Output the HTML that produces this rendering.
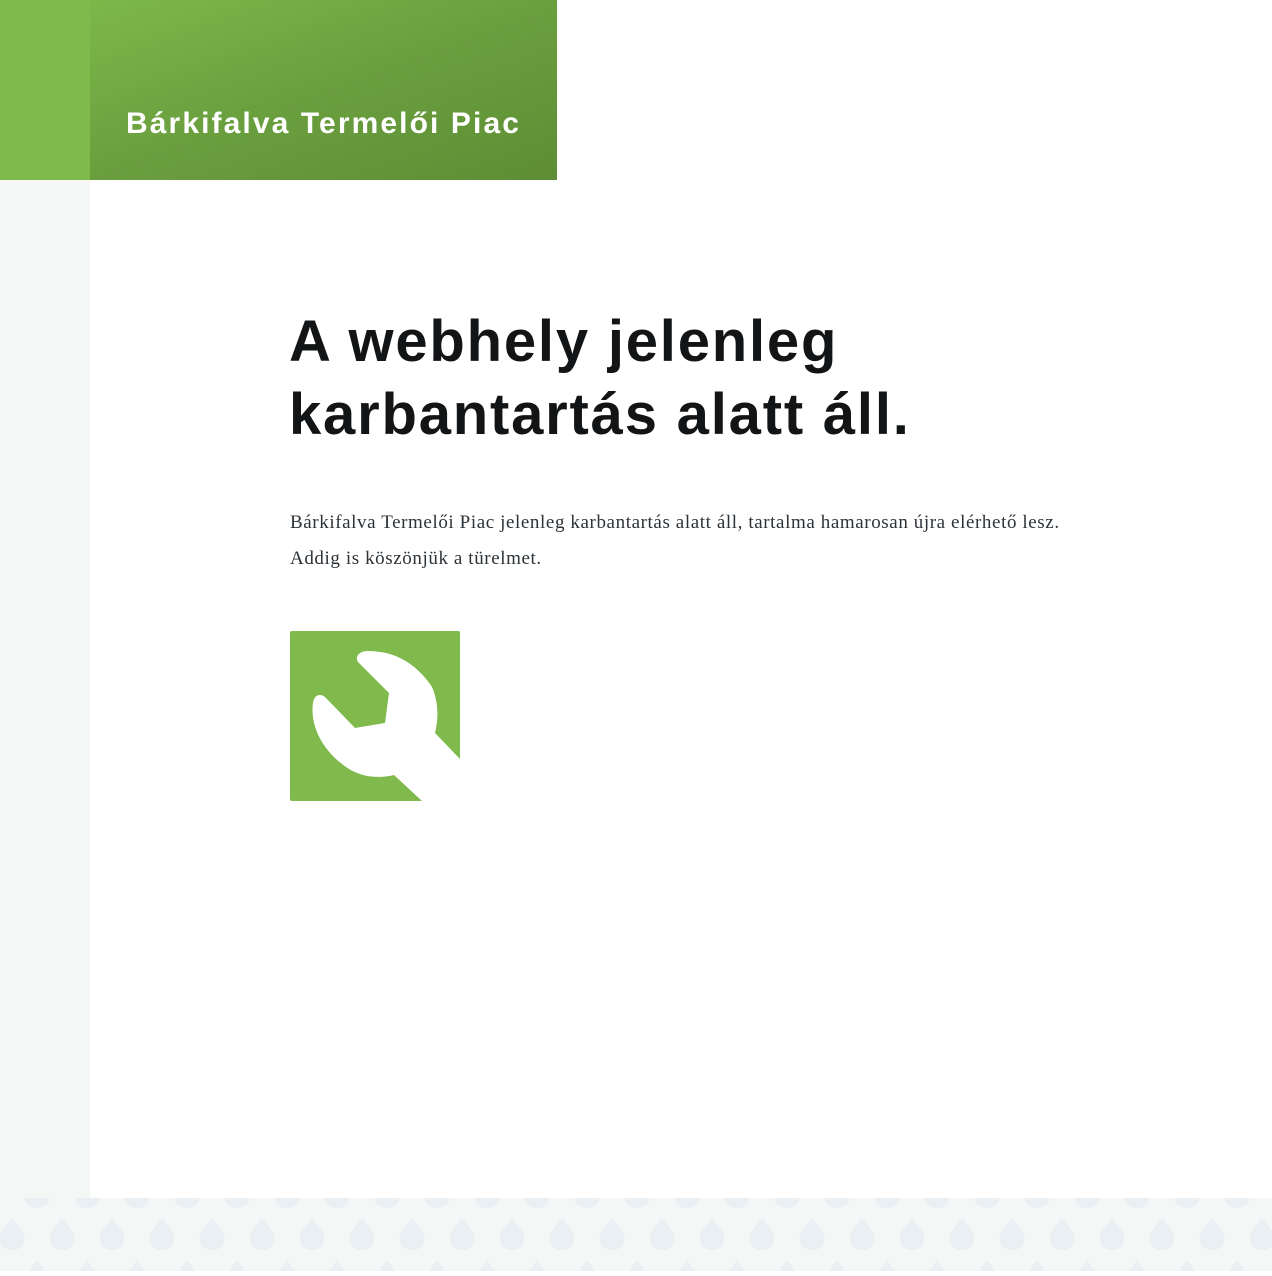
<!DOCTYPE html>
<html><head><meta charset="utf-8"><style>
html,body{margin:0;padding:0}
body{width:1272px;height:1271px;position:relative;background:#fff;overflow:hidden;font-family:"Liberation Sans",sans-serif}
.left{position:absolute;left:0;top:0;width:90px;height:1198px;background:#f5f7f6}
.leftg{position:absolute;left:0;top:0;width:90px;height:180px;background:#7fba4c}
.hdr{position:absolute;left:90px;top:0;width:467px;height:180px;background:linear-gradient(160deg,#7db84b 0%,#6a9f3e 50%,#5e8d35 100%)}
.hdr span{position:absolute;left:36px;top:107px;font-size:30px;font-weight:bold;color:#fff;letter-spacing:2.1px;white-space:nowrap}
h1{position:absolute;left:289px;top:305px;margin:0;font-size:58px;line-height:73px;font-weight:bold;color:#121416;letter-spacing:1.8px}
p{position:absolute;left:290px;top:505px;margin:0;font-family:"Liberation Serif",serif;font-size:19px;line-height:36px;color:#2c3338;width:950px;letter-spacing:0.6px;white-space:nowrap}
.foot{position:absolute;left:0;top:1198px;width:1272px;height:73px;background:#f5f7f6}
</style></head><body>
<div class="left"></div><div class="leftg"></div>
<div class="hdr"><span>Bárkifalva Termelői Piac</span></div>
<h1>A webhely jelenleg<br>karbantartás alatt áll.</h1>
<p>Bárkifalva Termelői Piac jelenleg karbantartás alatt áll, tartalma hamarosan újra elérhető lesz.<br>Addig is köszönjük a türelmet.</p>
<svg style="position:absolute;left:290px;top:631px" width="170" height="170" viewBox="0 0 170 170">
<rect width="170" height="170" rx="2" fill="#80ba4c"/>
<path fill="#fff" d="M132 170 L104 144 C88 148 70 146 56 136 C30 118 20 92 23 72 C24 64 30 62 35 66 L65 97 L95 92 L99 62 L69 32 C64 27 68 20 78 20 C110 20 130 38 142 56 C148 70 149 86 145 102 L170 128 L170 170 Z"/>
</svg>
<div class="foot"><svg width="1272" height="73">
<defs><pattern id="d" x="0" y="-22" width="50" height="84" patternUnits="userSpaceOnUse">
<path d="M37 0 L47 13 C52 20 50 32 37 32 C24 32 22 20 27 13 Z" fill="#eaeff3"/>
<path d="M12 42 L22 55 C27 62 25 74 12 74 C-1 74 -3 62 2 55 Z" fill="#eaeff3"/>
<path d="M62 42 L72 55 C77 62 75 74 62 74 C49 74 47 62 52 55 Z" fill="#eaeff3"/>
<path d="M37 84 L47 97 C52 104 50 116 37 116 C24 116 22 104 27 97 Z" fill="#eaeff3"/>
</pattern></defs>
<rect width="1272" height="73" fill="url(#d)"/></svg></div>
</body></html>
